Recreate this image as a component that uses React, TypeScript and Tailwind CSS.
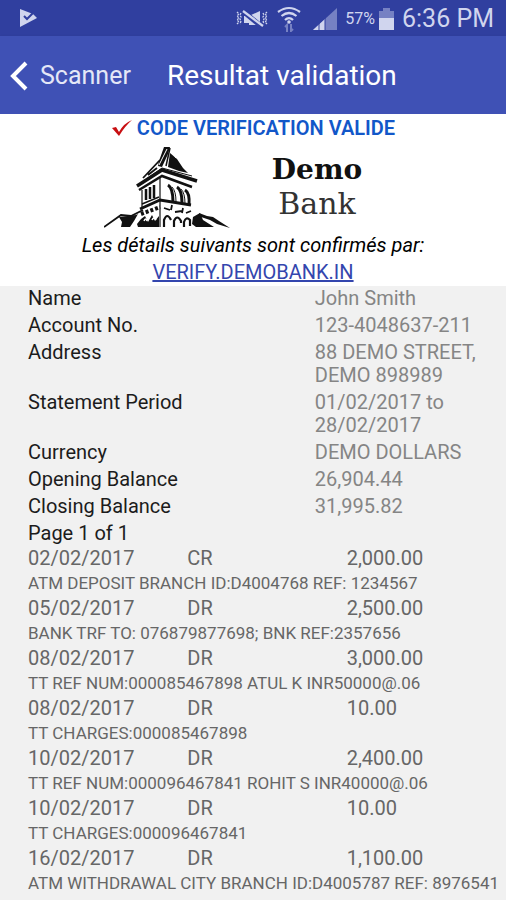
const details = [
  ['Name', 'John Smith'],
  ['Account No.', '123-4048637-211'],
  ['Address', '88 DEMO STREET, DEMO 898989'],
  ['Statement Period', '01/02/2017 to 28/02/2017'],
  ['Currency', 'DEMO DOLLARS'],
  ['Opening Balance', '26,904.44'],
  ['Closing Balance', '31,995.82'],
  ['Page 1 of 1', ''],
];

const transactions = [
  ['02/02/2017', 'CR', '2,000.00', 'ATM DEPOSIT BRANCH ID:D4004768 REF: 1234567'],
  ['05/02/2017', 'DR', '2,500.00', 'BANK TRF TO: 076879877698; BNK REF:2357656'],
  ['08/02/2017', 'DR', '3,000.00', 'TT REF NUM:000085467898 ATUL K INR50000@.06'],
  ['08/02/2017', 'DR', '10.00', 'TT CHARGES:000085467898'],
  ['10/02/2017', 'DR', '2,400.00', 'TT REF NUM:000096467841 ROHIT S INR40000@.06'],
  ['10/02/2017', 'DR', '10.00', 'TT CHARGES:000096467841'],
  ['16/02/2017', 'DR', '1,100.00', 'ATM WITHDRAWAL CITY BRANCH ID:D4005787 REF: 8976541'],
  ['18/02/2017', 'DR', '1,200.00', ''],
];

function StatusBar() {
  return (
    <div className="h-9 shrink-0 bg-[#303f9f] text-[#d0d5ee] flex items-center pl-5 pr-3 pt-0.5">
      <svg width="18" height="20" viewBox="0 0 18 20" className="mr-auto">
        <path d="M0 0 13 5 17 9 0 18Z" fill="currentColor" />
        <path d="m4 7 3 3 7-7" fill="none" stroke="#303f9f" strokeWidth="2" />
      </svg>

      <div className="flex items-center">
        {/* vibration / muet */}
        <svg width="34" height="22" viewBox="0 0 34 22" fill="none" stroke="currentColor">
          <path d="M2 4l2 2-2 2 2 2-2 2 2 2-2 2 M6 5l-1 2 1 2-1 2 1 2-1 3 M32 4l-2 2 2 2-2 2 2 2-2 2 2 2 M28 5l1 2-1 2 1 2-1 2 1 3" strokeWidth="1.300" strokeDasharray="2 1" />
          <path d="M9 8h4l10 9h-9v-2H9zM16 7l9-4v14z" fill="currentColor" stroke="none" />
          <path d="M9 4 27 19" stroke="#303f9f" strokeWidth="5" />
          <path d="M8 3 28 18" strokeWidth="2.200" />
        </svg>
        {/* wifi */}
        <svg width="24" height="26" viewBox="0 0 24 26" fill="none" stroke="currentColor" strokeWidth="2.200" className="ml-2">
          <path d="M1 6Q12-2 23 6M4.500 10Q12 4 19.500 10M8 14Q12 10 16 14" />
          <circle cx="12" cy="16" r="1.800" fill="currentColor" stroke="none" />
          <path d="M10 26v-7l-2 2M14 18v7l2-2" stroke="#7681c3" strokeWidth="2" />
        </svg>
        {/* réseau */}
        <svg width="24" height="22" viewBox="0 0 24 22" className="ml-3">
          <path d="M24 0v22H0z" fill="#7681c3" />
          <path d="M12 11v11H0z" fill="currentColor" />
          <path d="M6 15v7M12 10v12" stroke="#303f9f" />
        </svg>
        <span className="ml-2 text-base">57%</span>
        <svg width="15" height="22" viewBox="0 0 15 22" className="ml-1">
          <path d="M4 0h7v3h4v19H0V3h4z" fill="#7681c3" />
          <path d="M0 10h15v12H0z" fill="currentColor" />
        </svg>
        <span className="ml-2 text-[25px] leading-8">6:36 PM</span>
      </div>
    </div>
  );
}

function BankLogo() {
  return (
    <svg width="128" height="86" viewBox="0 0 128 86" fill="none" stroke="#111" className="shrink-0">
      {/* toit */}
      <path d="M60 3h6l-2 7-6 13-4-1 1-5z" fill="#111" stroke="none" />
      <path d="M66 9l7 6 6 9 5 5-9-2-11-4z" fill="#111" stroke="none" />
      <path d="M63 5 55 21M69 9l3 5" stroke="#fff" />
      <path d="M56 16 39 34M53 24 44 31" strokeWidth="1.800" />
      <path d="M66 4 62 22" strokeWidth="1.500" />
      <path d="M33 42 58 26 93 37" strokeWidth="3.500" />
      <path d="M38 38 58 24 88 32" strokeWidth="1" />
      <path d="M35 46 58 32 88 43" strokeWidth="2.500" />
      {/* fenêtres */}
      <path d="M56 33v50M38 46v18" strokeWidth="1.200" />
      <path d="M42 45v11M46 43v12M50 41v13" strokeWidth="2.500" />
      <path d="M64 41q5 3 5 17M73 43q5 3 5 16M81 46q5 3 4 15" strokeWidth="3" />
      <path d="M68 43q4 4 4 15M77 45q4 4 4 15" strokeWidth="1" />
      <path d="M36 65 56 56 87 61" strokeWidth="3" />
      <path d="M38 60 55 53" strokeWidth="1.500" />
      {/* arcades */}
      <path d="M37 70 56 63" strokeWidth="4" strokeDasharray="3 2" />
      <path d="M60 64l6 2M68 61l-1 5M71 68l7-1M79 64l-1 5M82 69l5-2" strokeWidth="1.800" />
      <path d="M33 80l4-5 4-3 3 6 4-7 3 6 4-5v11H34z" fill="#111" stroke="none" />
      <path d="M40 77q2-4 3 0M48 76q2-4 4 0" stroke="#fff" strokeWidth="1.500" />
      <path d="M60 83v-7q3-8 7 0M70 83v-6q3-7 7 0v2M80 83v-5q2-6 6-2v6" strokeWidth="2.200" />
      {/* rochers */}
      <path d="M0 83 17 71l10 1 12-6" strokeWidth="1.800" />
      <path d="M15 73l17-2 2-1-4 7-4 6h-9l1-5z" fill="#111" stroke="none" />
      <path d="M89 73 96 69l3 7 11 7H92l-4-3z" fill="#111" stroke="none" />
      <path d="M95 69l8 3 6 1 6 4 11 7-13-4-7-4-9-3z" fill="#111" stroke="none" />
    </svg>
  );
}

export default function App() {
  return (
    <div className="h-screen flex flex-col overflow-hidden bg-[#f1f1f1] font-[Roboto,sans-serif]">

      <StatusBar />

      {/* HEADER */}
      <header className="h-[78px] shrink-0 bg-[#3f51b5] text-white flex items-center shadow-sm pt-0.5">
        <button className="flex items-center gap-3 pl-2.5 text-[25px] text-[#e4e7f7]">
          <svg width="18" height="30" viewBox="0 0 18 30">
            <path d="M16 2 3 15l13 13" fill="none" stroke="#fff" strokeWidth="4" />
          </svg>
          Scanner
        </button>
        <h1 className="ml-9 text-[28px]">Resultat validation</h1>
      </header>

      <main className="flex-1 overflow-y-auto [scrollbar-width:none]">

        {/* RESULTAT */}
        <section className="bg-white flex flex-col items-center pt-0.5">
          <p className="flex items-center gap-1 text-xl leading-6 font-semibold text-[#1257c9]">
            <svg width="22" height="18" viewBox="0 0 22 18">
              <path d="M1 9 5 8l3 5Q13 4 21 1 14 7 8 17z" fill="#c80f12" />
            </svg>
            CODE VERIFICATION VALIDE
          </p>

          <div className="flex gap-10 pt-1 pb-0.5 pr-10">
            <BankLogo />
            <div className="text-center text-[#111] font-[DejaVu_Serif,serif] pt-2">
              <p className="text-[28px] leading-9 font-bold">Demo</p>
              <p className="text-[30px] leading-8 text-[#333]">Bank</p>
            </div>
          </div>

          <p className="text-xl leading-[27px] italic">Les détails suivants sont confirmés par:</p>
          <a href="#" className="text-xl leading-[27px] text-[#3446ae] underline">VERIFY.DEMOBANK.IN</a>
        </section>

        {/* COMPTE */}
        <dl className="pl-7 pt-px text-xl leading-[23px]">
          {details.map(([label, value]) => (
            <div key={label} className="flex pb-1 last:pb-0">
              <dt className="w-3/5 text-[#1c1c1c]">{label}</dt>
              <dd className="w-2/5 text-[#858585]">{value}</dd>
            </div>
          ))}
        </dl>

        {/* OPERATIONS */}
        <div className="pl-7">
          <table className="w-full table-fixed text-left text-[#666]">
            {transactions.map(([date, type, amount, label], i) => (
              <tbody key={i}>
                <tr className="text-xl leading-[26px]">
                  <td>{date}</td>
                  <td>{type}</td>
                  <td>{amount}</td>
                </tr>
                <tr className="text-[17px] leading-6 whitespace-nowrap">
                  <td colSpan={3}>{label}</td>
                </tr>
              </tbody>
            ))}
          </table>
        </div>

      </main>

    </div>
  );
}
